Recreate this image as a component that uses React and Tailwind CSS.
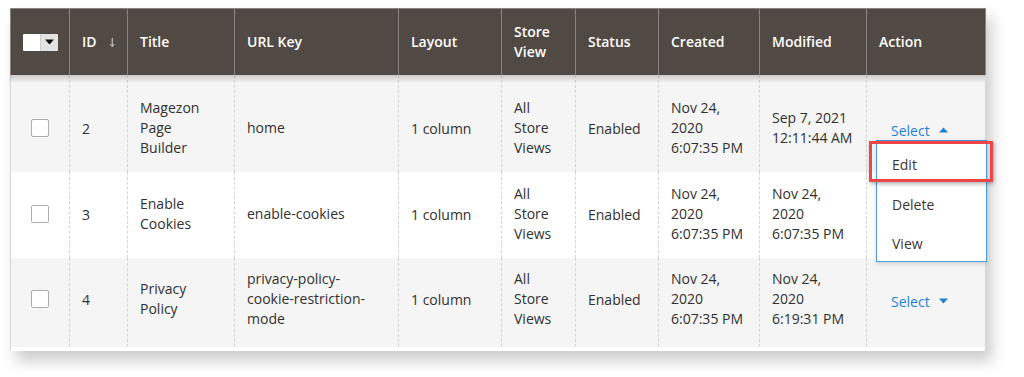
import React from "react";

const COLS =
  "grid grid-cols-[59px_58px_107px_164px_103px_74px_83px_101px_107px_120px]";

const rows = [
  {
    id: "2",
    title: ["Magezon", "Page", "Builder"],
    url: ["home"],
    created: ["Nov 24,", "2020", "6:07:35 PM"],
    modified: ["Sep 7, 2021", "12:11:44 AM"],
    bg: "bg-[#f5f5f5]",
    h: "h-[97px] pt-[9px]",
    open: true,
    select: true,
  },
  {
    id: "3",
    title: ["Enable", "Cookies"],
    url: ["enable-cookies"],
    created: ["Nov 24,", "2020", "6:07:35 PM"],
    modified: ["Nov 24,", "2020", "6:07:35 PM"],
    bg: "bg-white",
    h: "h-[86px] pb-[2px]",
    select: false,
  },
  {
    id: "4",
    title: ["Privacy", "Policy"],
    url: ["privacy-policy-", "cookie-restriction-", "mode"],
    created: ["Nov 24,", "2020", "6:07:35 PM"],
    modified: ["Nov 24,", "2020", "6:19:31 PM"],
    bg: "bg-[#f5f5f5]",
    h: "h-[89px] pb-[7px]",
    select: true,
  },
];

function Lines({ lines }) {
  return (
    <div className="leading-[20px] whitespace-nowrap">
      {lines.map((l, i) => (
        <div key={i}>{l}</div>
      ))}
    </div>
  );
}

function Caret({ up }) {
  return (
    <svg width="9" height="6" viewBox="0 0 9 6" className="ml-[9px]">
      {up ? (
        <path d="M0 5.5 L4.5 0.5 L9 5.5 Z" fill="#1f7fd6" />
      ) : (
        <path d="M0 0.5 L4.5 5.5 L9 0.5 Z" fill="#1f7fd6" />
      )}
    </svg>
  );
}

const H =
  "flex items-center px-3 border-l border-[#8a837f] text-white font-semibold text-[14px] leading-[20px]";
const C = "flex items-center px-3 border-l border-dashed border-[#d4d4d4]";

export default function App() {
  return (
    <div
      className="w-[1024px] h-[377px] bg-white pl-[10px] pt-[8px] overflow-hidden"
      style={{ fontFamily: '"Open Sans", "Noto Sans", sans-serif' }}
    >
      <div className="relative w-[976px] shadow-[6px_10px_14px_rgba(0,0,0,0.2)] bg-white">
        {/* Header */}
        <div
          className={`${COLS} h-[67px] bg-[#514943] border-t border-r border-[#8a837f]`}
        >
          <div className="flex items-center justify-center border-l border-[#8a837f]">
            <div className="flex h-[17px] w-[35px] rounded-[1px] overflow-hidden">
              <div className="w-[17px] bg-white" />
              <div className="flex-1 bg-[#e3e3e3] flex items-center justify-center border-l border-[#cfcfcf]">
                <svg width="9" height="6" viewBox="0 0 9 6">
                  <path d="M0 0.5 L4.5 5.5 L9 0.5 Z" fill="#111" />
                </svg>
              </div>
            </div>
          </div>
          <div className={H}>
            <span>ID</span>
            <svg width="10" height="15" viewBox="0 0 10 15" className="ml-[12px]">
              <path
                d="M5 0.5 V13.5 M1.5 10 L5 13.8 L8.5 10"
                stroke="#ece9e6"
                strokeWidth="1.4"
                fill="none"
              />
            </svg>
          </div>
          <div className={H}>Title</div>
          <div className={H}>URL Key</div>
          <div className={H}>Layout</div>
          <div className={H}>
            <div>
              <div>Store</div>
              <div>View</div>
            </div>
          </div>
          <div className={H}>Status</div>
          <div className={H}>Created</div>
          <div className={H}>Modified</div>
          <div className={H}>Action</div>
        </div>

        {/* Body */}
        <div className="relative border-r border-[#d6d6d6] text-[14px] text-[#303030]">
          {rows.map((r, idx) => (
            <div key={idx} className={`${COLS} ${r.bg}`}>
              <div
                className={`flex items-center justify-center border-l border-[#d6d6d6] ${r.h}`}
              >
                <div className="w-[18px] h-[18px] bg-white border border-[#adadad] rounded-[2px]" />
              </div>
              <div className={`${C} ${r.h}`}>{r.id}</div>
              <div className={`${C} ${r.h}`}>
                <Lines lines={r.title} />
              </div>
              <div className={`${C} ${r.h}`}>
                <Lines lines={r.url} />
              </div>
              <div className={`${C} ${r.h}`}>1 column</div>
              <div className={`${C} ${r.h}`}>
                <Lines lines={["All", "Store", "Views"]} />
              </div>
              <div className={`${C} ${r.h}`}>Enabled</div>
              <div className={`${C} ${r.h}`}>
                <Lines lines={r.created} />
              </div>
              <div className={`${C} ${r.h}`}>
                <Lines lines={r.modified} />
              </div>
              <div className={`${C} ${r.h} relative pl-[24px]`}>
                {r.select && (
                  <div className="flex items-center text-[#1f7fd6] mt-[4px]">
                    <span>Select</span>
                    <Caret up={!!r.open} />
                  </div>
                )}
                {r.open && (
                  <>
                    <div className="absolute z-10 left-[9px] top-[65px] w-[111px] h-[122px] bg-white border border-[#4d9be0] shadow-[0_2px_4px_rgba(0,0,0,0.15)] pt-[3px]">
                      <div className="h-[40px] flex items-center pl-[15px] text-[#41362f]">
                        Edit
                      </div>
                      <div className="h-[40px] flex items-center pl-[15px] text-[#41362f]">
                        Delete
                      </div>
                      <div className="h-[39px] flex items-center pl-[15px] text-[#41362f]">
                        View
                      </div>
                    </div>
                    <div className="absolute z-20 left-[2px] top-[66px] w-[124px] h-[41px] border-[3px] border-[#ec4646] shadow-[1px_2px_4px_rgba(0,0,0,0.3)]" />
                  </>
                )}
              </div>
            </div>
          ))}
          <div className="h-[4px] bg-white border-l border-[#d6d6d6]" />
          {/* shadow under sticky header */}
          <div className="absolute left-0 right-0 top-0 h-[8px] bg-gradient-to-b from-[rgba(0,0,0,0.18)] to-transparent pointer-events-none" />
        </div>
      </div>
    </div>
  );
}
